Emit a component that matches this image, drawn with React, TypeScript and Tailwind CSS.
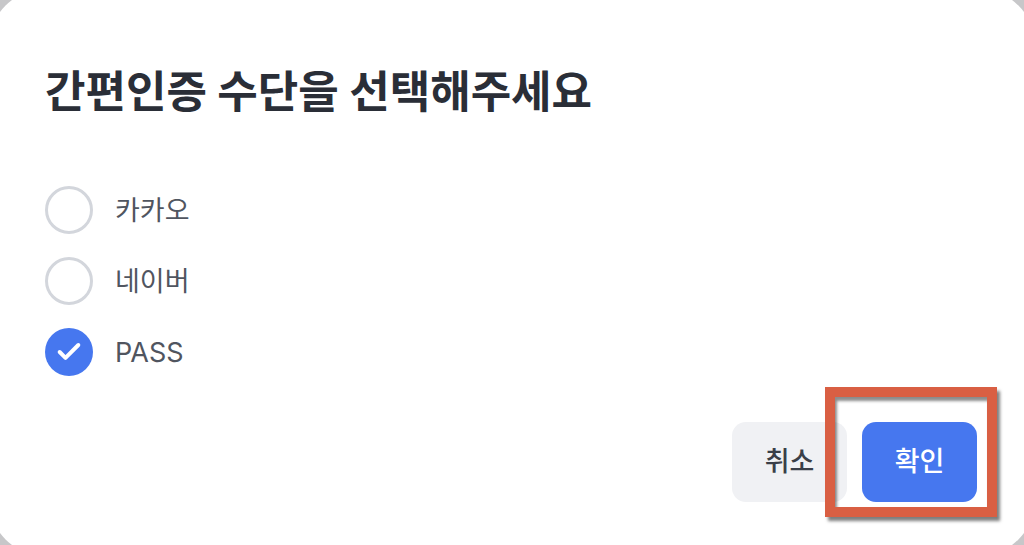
import { Check } from "lucide-react"

const options = [
  { id: "kakao", label: "카카오", checked: false },
  { id: "naver", label: "네이버", checked: false },
  { id: "pass", label: "PASS", checked: true },
]

function Radio({ checked }: { checked: boolean }) {
  if (checked) {
    return (
      <span className="flex h-[48px] w-[48px] items-center justify-center rounded-full bg-[#4677ef]">
        <Check className="h-[28px] w-[28px] text-white" strokeWidth={3.4} />
      </span>
    )
  }
  return <span className="block h-[48px] w-[48px] rounded-full border-[3px] border-[#d3d6dc] bg-white" />
}

export default function App() {
  return (
    <div
      className="h-[545px] w-[1024px] overflow-hidden bg-[#c7c7c9]"
      style={{ fontFamily: 'Inter, "Noto Sans CJK KR", sans-serif' }}
    >
      <div className="-m-[12px] flex h-[569px] w-[1048px] flex-col rounded-[60px] bg-white pl-[57px] pr-[59px] pt-[78px]">
        <h1 className="text-[44px] font-bold leading-[52px] text-[#2a2e37]">
          간편인증 수단을 선택해주세요
        </h1>

        <div className="mt-[68px] flex flex-col gap-[23px]">
          {options.map((o) => (
            <label key={o.id} className="flex h-[48px] items-center gap-[22px]">
              <Radio checked={o.checked} />
              <span className="text-[27px] leading-none text-[#50555f]">{o.label}</span>
            </label>
          ))}
        </div>

        <div className="mt-[46px] flex justify-end gap-[15px]">
          <button className="h-[80px] w-[115px] rounded-[14px] bg-[#f0f1f4] text-[27px] font-medium text-[#3a3f48]">
            취소
          </button>
          <div className="relative">
            <button className="h-[80px] w-[115px] rounded-[14px] bg-[#4677ef] text-[27px] font-medium text-white">
              확인
            </button>
            {/* annotation box */}
            <div className="pointer-events-none absolute -left-[37px] -top-[35px] h-[130px] w-[172px] border-[10px] border-[#d95f43] shadow-[3px_4px_3px_rgba(0,0,0,0.5),inset_2px_4px_3px_rgba(0,0,0,0.45)]" />
          </div>
        </div>
      </div>
    </div>
  )
}
